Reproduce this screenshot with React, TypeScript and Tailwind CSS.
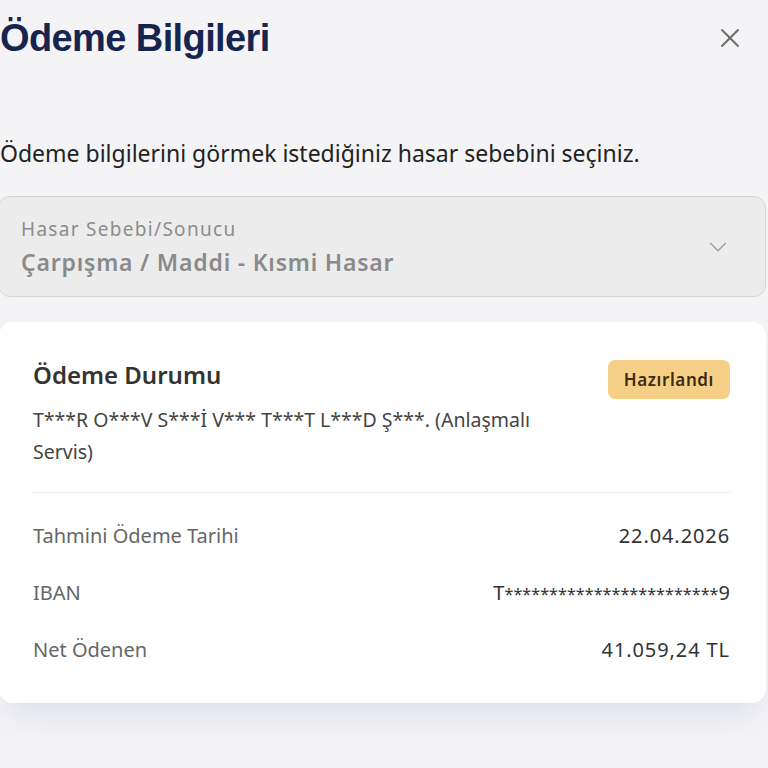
import { X, ChevronDown } from "lucide-react";
import type { ReactNode } from "react";

const rows: { label: string; value: ReactNode; valueClass: string }[] = [
  { label: "Tahmini Ödeme Tarihi", value: "22.04.2026", valueClass: "tracking-[0.9px]" },
  {
    label: "IBAN",
    value: (
      <>
        T<span className="text-[16.2px] leading-none">{"*".repeat(24)}</span>9
      </>
    ),
    valueClass: "",
  },
  { label: "Net Ödenen", value: "41.059,24 TL", valueClass: "tracking-[0.9px]" },
];

export default function App() {
  return (
    <div
      className="min-h-[768px] w-[768px] overflow-hidden bg-[#f4f4f7] pr-[2px]"
      style={{ fontFamily: "'Noto Sans', Lato, sans-serif" }}
    >
      <header className="flex items-start justify-between pt-[16px]">
        <h1
          className="text-[38px] font-bold leading-[44px] tracking-[-0.6px] text-[#16254f]"
          style={{ fontFamily: "'Liberation Sans', Arial, sans-serif" }}
        >
          Ödeme Bilgileri
        </h1>
        <button className="mr-[20px] mt-[6px] text-[#6b6b6b]">
          <X size={32} strokeWidth={1.5} />
        </button>
      </header>

      <p className="mt-[78px] text-[23px] leading-[30px] text-[#222]">
        Ödeme bilgilerini görmek istediğiniz hasar sebebini seçiniz.
      </p>

      <div className="-ml-[2px] mt-[28px] flex h-[101px] items-center justify-between rounded-[12px] border border-[#d6d6d6] bg-[#ececec] pl-[22px] pr-[32px]">
        <div className="flex flex-col">
          <span className="text-[19px] leading-[24px] tracking-[1.3px] text-[#8c8c8c]">Hasar Sebebi/Sonucu</span>
          <span className="mt-[7px] text-[23px] font-semibold leading-[28px] tracking-[0.8px] text-[#8a8a8a]">
            Çarpışma / Maddi - Kısmi Hasar
          </span>
        </div>
        <ChevronDown size={30} strokeWidth={1} className="text-[#9a9a9a]" />
      </div>

      <div className="-ml-[1px] mt-[25px] rounded-[14px] bg-white pb-[40px] pl-[34px] pr-[36px] pt-[38px] shadow-[0_20px_30px_-10px_rgba(200,205,225,0.6)]">
        <div className="flex items-start justify-between">
          <div className="max-w-[540px]">
            <h2 className="text-[24px] font-semibold leading-[30px] text-[#333]">Ödeme Durumu</h2>
            <p className="mt-[14px] text-[19.5px] leading-[32px] text-[#444]">
              T***R O***V S***İ V*** T***T L***D Ş***. (Anlaşmalı Servis)
            </p>
          </div>
          <span className="rounded-[7px] bg-[#f6cf86] px-[16px] py-[8px] text-[17px] font-semibold leading-[23px] tracking-[0.6px] text-[#3d2a12]">
            Hazırlandı
          </span>
        </div>

        <div className="mt-[24px] border-t border-[#eeeeee] pt-[30px]">
          <div className="flex flex-col gap-[31px]">
            {rows.map((row) => (
              <div key={row.label} className="flex h-[26px] items-center justify-between text-[20px] leading-[26px]">
                <span className="text-[#666]">{row.label}</span>
                <span className={`text-[#333] ${row.valueClass}`}>{row.value}</span>
              </div>
            ))}
          </div>
        </div>
      </div>
    </div>
  );
}
